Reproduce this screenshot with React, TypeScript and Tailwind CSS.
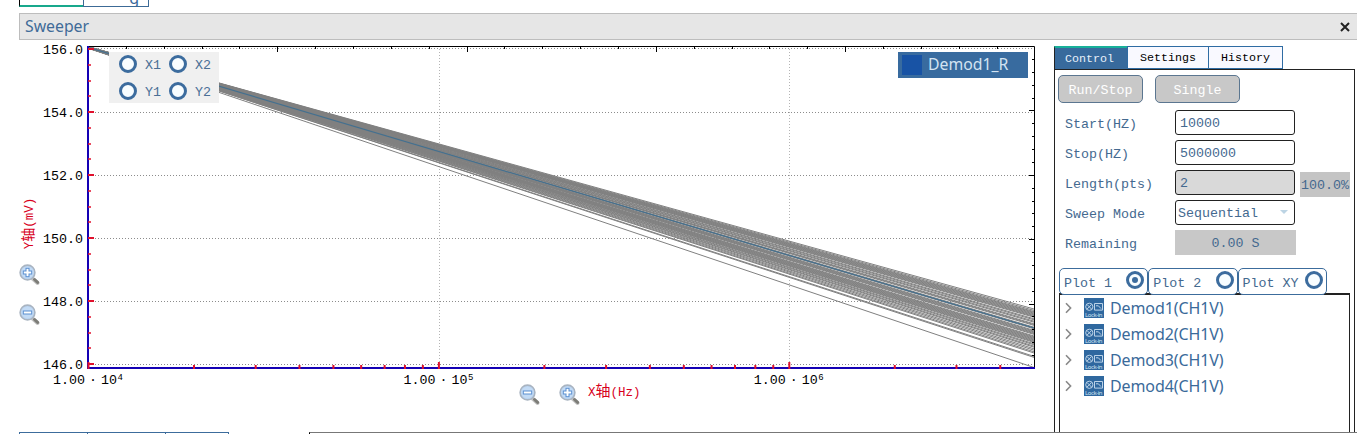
import React from 'react';

const MONO = "font-['Liberation_Mono','Noto_Sans_CJK_SC',monospace]";
const SANS = "font-['Noto_Sans','Open_Sans',sans-serif]";

// plot area, in the units of the chart viewBox
const LEFT = 88;
const RIGHT = 1034;
const TOP = 46;
const BOTTOM = 368;
const DECADE = 350.4;

const yLabels = ['156.0', '154.0', '152.0', '150.0', '148.0', '146.0'];
const xLabels = [4, 5, 6];

// height at which every history trace leaves the plot on the right
const traces = [
  309, 310.4, 311.6, 312.4, 313.2, 314, 314.8, 315.6, 316.4, 317.2, 318.8, 319.8,
  321.2, 322.2, 323.8, 324.6, 325.4, 327.2, 328, 328.8, 330.4, 331.2, 332, 332.8,
  333.6, 334.4, 336, 336.8, 337.6, 338.4, 339.2, 340, 340.8, 341.6, 342.4, 343.8,
  344.8, 346.2, 347.2, 348.8, 350.2, 351.8, 353, 356.4, 357.4, 367.5,
];

const range = (n: number) => Array.from({ length: n }, (_, i) => i);

type RadioProps = { checked?: boolean };

function Radio({ checked }: RadioProps) {
  return (
    <span className="flex h-[18px] w-[18px] shrink-0 items-center justify-center rounded-full border-[3.5px] border-[#3c6c9e] bg-[#f8fdff]">
      {checked && <span className="h-[6px] w-[6px] rounded-full bg-[#3c6c9e]" />}
    </span>
  );
}

type ZoomProps = { plus?: boolean };

function ZoomButton({ plus }: ZoomProps) {
  return (
    <button className="block h-[22px] w-[22px]">
      <svg width="22" height="22" viewBox="0 0 22 22">
        <path d="M13.5 14.5L18.6 19" stroke="#c4c4c4" strokeWidth="4" strokeLinecap="round" />
        <path d="M15.5 15.5L18.6 18.4" stroke="#7d7d78" strokeWidth="3" strokeLinecap="round" />
        <circle cx="8.5" cy="8.5" r="7.4" fill="#bcd6f3" stroke="#a9b4c1" strokeWidth="1.6" />
        <circle cx="8.5" cy="8.5" r="5.8" fill="#c3dbf5" />
        <path d="M3.8 8.5h9.4" stroke="#5b8fd0" strokeWidth="4" />
        {plus && <path d="M8.5 3.8v9.4" stroke="#5b8fd0" strokeWidth="4" />}
        <path d="M4.8 8.5h7.4" stroke="#fff" strokeWidth="2" />
        {plus && <path d="M8.5 4.8v7.4" stroke="#fff" strokeWidth="2" />}
      </svg>
    </button>
  );
}

function Chart() {
  return (
    <svg width="1002" height="352" viewBox="43 40 1002 352" className={`block overflow-visible ${MONO}`}>
      <g stroke="#8c8c8c" strokeDasharray="1 2">
        {yLabels.map((l, i) => (
          <path key={l} d={`M95 ${49.5 - (i === 0 ? 1 : 0) + i * 63}H${RIGHT}`} />
        ))}
        <path d={`M439.5 ${TOP}V${BOTTOM}`} stroke="#b4b4b4" />
        <path d={`M789.5 ${TOP}V${BOTTOM}`} stroke="#b4b4b4" />
      </g>

      {traces.map((y, i) => (
        <path key={y} d={`M${LEFT} ${46.6 + i * 0.035}L${RIGHT} ${y}`} stroke="#808080" />
      ))}
      <path d={`M${LEFT} 47.4L${RIGHT} 328`} stroke="#44708f" strokeWidth="1.2" />

      <path d={`M${LEFT} ${TOP + 0.5}H${RIGHT + 0.5}V${BOTTOM}`} fill="none" stroke="#000" />
      {range(25).map((i) => (
        <path
          key={i}
          d={`M${Math.round(LEFT + i * 37.86)}.5 ${TOP}v${i % 5 === 0 ? 6 : 3}`}
          stroke="#000"
        />
      ))}
      {range(25).map((i) => (
        <path
          key={i}
          d={`M${RIGHT} ${Math.round(TOP + i * 12.88)}.5h${i % 5 === 0 ? -5 : -2}`}
          stroke="#000"
        />
      ))}

      <path d={`M${LEFT} ${TOP}V${BOTTOM}`} stroke="#1400b4" strokeWidth="2" />
      <path d={`M${LEFT - 1} ${BOTTOM}H${RIGHT + 1}`} stroke="#1400b4" strokeWidth="2" />
      {range(21).map((i) => (
        <path
          key={i}
          d={`M${LEFT} ${Math.min(364, Math.round(49 + i * 15.75))}h${i % 4 === 0 ? 6 : 3}`}
          stroke="#e0102c"
          strokeWidth={i % 4 === 0 ? 2 : 1.5}
        />
      ))}
      {range(3).map((d) =>
        range(9).map((m) => {
          const x = LEFT + 0.5 + DECADE * (d + Math.log10(m + 1));
          return x < RIGHT ? (
            <path key={`${d}-${m}`} d={`M${x} ${BOTTOM + 1}v${m === 0 ? -7 : -4}`} stroke="#e0102c" strokeWidth="2" />
          ) : null;
        })
      )}

      <g fontSize="13.33" fill="#000">
        {yLabels.map((l, i) => (
          <text key={l} x="43" y={54 + i * 63}>
            {l}
          </text>
        ))}
        {xLabels.map((e, i) => (
          <g key={e}>
            <text x={53 + i * 350.4} y="384">1.00</text>
            <text x={89 + i * 350.4} y="384">·</text>
            <text x={101 + i * 350.4} y="384">10</text>
            <text x={117.5 + i * 350.4} y="380" fontSize="9">{e}</text>
          </g>
        ))}
      </g>
    </svg>
  );
}

function Markers() {
  return (
    <div className={`absolute left-[66px] top-[12px] grid h-[51px] w-[110px] grid-cols-[50px_50px] grid-rows-[24px_30px] bg-[#f0f0f0] pl-[10px] text-[13.33px] text-[#4a6f96] ${MONO}`}>
      {['X1', 'X2', 'Y1', 'Y2'].map((m) => (
        <label key={m} className="flex items-center gap-2">
          <Radio />
          <span className="pt-[3px]">{m}</span>
        </label>
      ))}
    </div>
  );
}

function Legend() {
  return (
    <div className={`absolute left-[855px] top-[12px] flex h-[26px] w-[130px] items-center bg-[#386b9f] pl-1 text-[15.8px] text-[#d3e3f2] ${SANS}`}>
      <span className="mr-[6px] h-5 w-5 bg-[#1853a5]" />
      Demod1_R
    </div>
  );
}

type FieldProps = { label: string; children: React.ReactNode };

function Field({ label, children }: FieldProps) {
  return (
    <div className="flex h-[30px] items-center">
      <span className="w-[111px] shrink-0 pl-[1px] pt-[5px]">{label}</span>
      {children}
    </div>
  );
}

function LockInIcon() {
  return (
    <svg width="20" height="20" viewBox="0 0 20 20" className={SANS}>
      <rect width="20" height="20" fill="#2f689f" />
      <g fill="none" stroke="#bcd3e8" strokeWidth="1">
        <circle cx="5.3" cy="8.8" r="3.6" />
        <path d="M3 6.5l4.6 4.6M7.6 6.5L3 11.1M10.5 5.5h8v6.6h-8zM12 7.8h2.4l2.6 2.8" />
      </g>
      <text x="1" y="18.8" fontSize="6" textLength="17.5" fill="#d6e5f3">
        Lock-in
      </text>
    </svg>
  );
}

function ControlPanel() {
  const box = 'flex h-[25px] w-[120px] items-center rounded-[3px] border border-[#222] pl-1 pt-[3px]';

  return (
    <div className={`flex w-[301px] flex-col text-[13.33px] text-[#44698f] ${MONO}`}>
      <div className="flex h-[23px] text-[11.67px] leading-none text-black">
        <div className="flex w-[73px] items-center border-t-2 border-l border-t-[#18b09a] border-l-[#222] bg-[#386a9c] pl-[10px] pt-[2px] text-[#e6f0fa]">Control</div>
        <div className="flex w-[82px] items-center justify-center border border-[#2f6ca3] bg-[#f9f9ff] pt-[3px]">Settings</div>
        <div className="flex w-[74px] items-center justify-center border border-l-0 border-[#2f6ca3] bg-[#f9f9ff] pt-[3px]">History</div>
      </div>

      <div className="flex flex-1 flex-col border border-b-0 border-[#222] pl-[3px] pt-[5px]">
        <div className="flex gap-3 text-white">
          <button className="h-7 w-[85px] rounded-[5px] border border-[#5b7690] bg-[#c8c8c8] pt-[3px]">Run/Stop</button>
          <button className="h-7 w-[85px] rounded-[5px] border border-[#5b7690] bg-[#c8c8c8] pt-[3px]">Single</button>
        </div>

        <div className="mt-1 pl-[6px]">
          <Field label="Start(HZ)">
            <div className={box}>10000</div>
          </Field>
          <Field label="Stop(HZ)">
            <div className={box}>5000000</div>
          </Field>
          <Field label="Length(pts)">
            <div className={`${box} bg-[#d9d9d9]`}>2</div>
            <span className="ml-[5px] mt-1 flex h-[25px] w-[50px] items-center justify-center bg-[#c4c4c4] pt-[3px]">100.0%</span>
          </Field>
          <Field label="Sweep Mode">
            <div className="flex h-[25px] w-[120px] items-center justify-between rounded-[3px] border border-[#222] pl-[2px] pr-[6px]">
              <span className="pt-[4px]">Sequential</span>
              <span className="border-x-[4px] border-t-[4px] border-x-transparent border-t-[#bcd4e4]" />
            </div>
          </Field>
          <Field label="Remaining">
            <div className="flex h-[25px] w-[121px] items-center justify-center bg-[#c8c8c8] pt-[3px]">0.00 S</div>
          </Field>
        </div>

        <div className="mt-[11px] flex pl-[1px]">
          {['Plot 1', 'Plot 2', 'Plot XY'].map((p, i) => (
            <div key={p} className="z-10 flex h-[27px] w-[89.3px] items-start justify-between rounded-[5px] border border-[#3c6c9c] bg-white pl-1 pr-[3px] pt-[2px]">
              <span className="pt-[3px]">{p}</span>
              <Radio checked={i === 0} />
            </div>
          ))}
        </div>

        <div className={`-mt-[2px] ml-[1px] w-[291px] flex-1 border-x border-t-2 border-[#222] text-[16px] text-[#3a6a9a] ${SANS}`}>
          {[1, 2, 3, 4].map((n) => (
            <div key={n} className="flex h-[26px] items-center pl-[5px]">
              <svg width="8" height="12" viewBox="0 0 8 12" className="mr-[11px]">
                <path d="M1 1.2L5.6 6 1 10.8" fill="none" stroke="#888" strokeWidth="1.6" />
              </svg>
              <LockInIcon />
              <span className="ml-[6px] tracking-[-0.1px]">Demod{n}(CH1V)</span>
            </div>
          ))}
        </div>
      </div>
    </div>
  );
}

export default function App() {
  return (
    <div className="flex h-[434px] w-[1357px] flex-col overflow-hidden bg-white pl-[19px]">
      <div className="flex h-[7px] shrink-0 overflow-hidden">
        <div className="w-[64px] border-b-2 border-l border-b-[#18a88c] border-l-black" />
        <div className={`flex w-[66px] items-end justify-end border-x border-b border-[#3c6a96] pb-[3px] pr-[9px] text-[16px] leading-[10px] text-[#3a6a9a] ${SANS}`}>
          g
        </div>
      </div>

      <div className={`mt-[6px] flex h-[27px] shrink-0 items-center justify-between border border-r-0 border-[#bdbdbd] bg-[#e6e6e6] pl-[5px] pr-[7px] text-[15.8px] text-[#3f6b98] ${SANS}`}>
        <span className="pt-px">Sweeper</span>
        <svg width="10" height="10" viewBox="0 0 10 10">
          <path d="M1 1l8 8M9 1L1 9" stroke="#222" strokeWidth="2" />
        </svg>
      </div>

      <div className="flex h-[392px] shrink-0">
        <div className="flex w-6 shrink-0 flex-col">
          <div className="mb-4 mt-[158px] flex h-[50px] w-[22px] items-center justify-center">
            <span className={`shrink-0 -rotate-90 whitespace-nowrap text-[12.5px] leading-4 text-[#d8001c] ${MONO}`}>
              Y<span className="text-[14px]">轴</span>(mV)
            </span>
          </div>
          <ZoomButton plus />
          <div className="mt-[18px]">
            <ZoomButton />
          </div>
        </div>

        <div className="relative w-[1002px] shrink-0">
          <Chart />
          <Markers />
          <Legend />
          <div className="-mt-[8px] flex pl-[476px]">
            <ZoomButton />
            <div className="ml-[18px]">
              <ZoomButton plus />
            </div>
            <span className={`ml-[7px] pt-px text-[12.5px] leading-4 text-[#d8001c] ${MONO}`}>
              X<span className="text-[15px]">轴</span>(Hz)
            </span>
          </div>
        </div>

        <div className="ml-[9px] flex pt-[6px]">
          <ControlPanel />
        </div>
      </div>

      <div className="flex h-[2px] shrink-0">
        <div className="w-[68px] border-l border-t border-[#3c6c9c]" />
        <div className="w-[78px] border-l border-t border-[#3c6c9c]" />
        <div className="w-[64px] border-x border-t border-[#3c6c9c]" />
        <div className="ml-20 flex-1 border-l border-t border-l-black border-t-[#777]" />
      </div>
    </div>
  );
}
